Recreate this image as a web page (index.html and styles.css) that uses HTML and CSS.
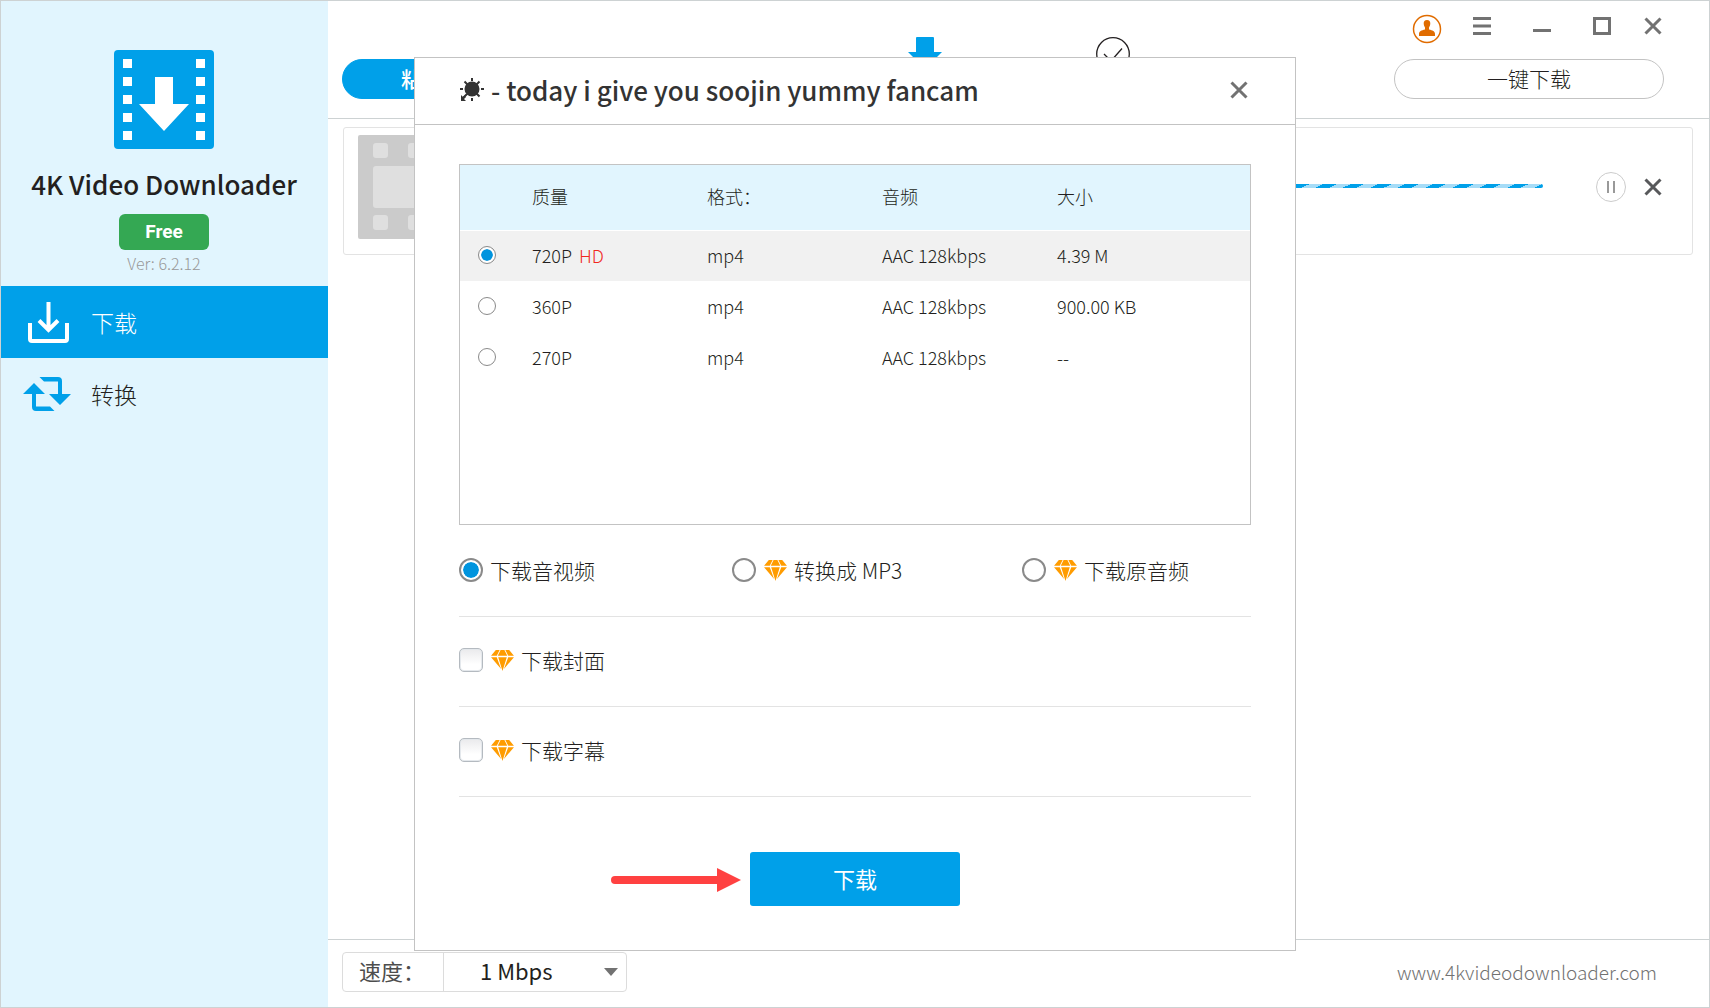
FILE: index.html
```html
<!DOCTYPE html>
<html lang="zh-CN">
<head>
<meta charset="utf-8">
<title>4K Video Downloader</title>
<link rel="stylesheet" href="styles.css">
</head>
<body>
<svg class="symbols" aria-hidden="true">
  <symbol id="gem" viewBox="0 0 24 22">
    <path d="M5 0h4L6 6H0zM10 0h4l3 6H7zM15 0h4l5 6h-6zM0 7.500h6L10.500 20zM7.500 7.500h9L12 22zM18 7.500h6L13.500 20z"/>
  </symbol>
  <symbol id="cross" viewBox="0 0 18 18">
    <path d="M1.500 1.500l15 15M16.500 1.500l-15 15" fill="none" stroke="currentColor" stroke-width="3"/>
  </symbol>
</svg>
<div class="window">
  <aside class="sidebar">
    <div class="brand">
      <svg class="logo" viewBox="0 0 100 99" aria-hidden="true">
        <rect width="100" height="99" rx="4" fill="#00a0e9"/>
        <path fill="#fff" d="M9 9h9v9H9zM9 27h9v9H9zM9 45h9v9H9zM9 63h9v9H9zM9 81h9v9H9zM82 9h9v9h-9zM82 27h9v9h-9zM82 45h9v9h-9zM82 63h9v9h-9zM82 81h9v9h-9zM41 27h18v27h16L50 81 25 54h16z"/>
      </svg>
      <h1 class="brand-name">4K Video Downloader</h1>
      <span class="badge">Free</span>
      <span class="version">Ver: 6.2.12</span>
    </div>
    <nav class="nav">
      <a class="nav-item active" href="#download">
        <svg class="nav-icon" viewBox="0 0 48 42" fill="none" stroke="#fff" stroke-width="4" aria-hidden="true">
          <path d="M7 22v16a2 2 0 0 0 2 2h33a2 2 0 0 0 2-2V22M25.500 1v28M16 19.500l9.500 9.500 9.500-9.500"/>
        </svg>
        下载
      </a>
      <a class="nav-item" href="#convert">
        <svg class="nav-icon" viewBox="0 0 48 42" fill="#00a0e9" aria-hidden="true">
          <path d="M16.500 4H35q4 0 4 4v13h9L37 32 26 21h9V8.500H21zM11 10L22 21h-9v12.500h14l4.500 4.500H13q-4 0-4-4V21H0z"/>
        </svg>
        转换
      </a>
    </nav>
  </aside>

  <main class="main">
    <header class="topbar">
      <button class="pill paste" type="button">粘贴链接</button>
      <div class="tabs">
        <button class="icon-button" type="button" aria-label="下载中">
          <svg width="34" height="34" viewBox="0 0 34 34"><path fill="#00a0e9" d="M9 0h16q1 0 1 1v14h8L17 32 0 15h8V1q0-1 1-1z"/></svg>
        </button>
        <button class="icon-button" type="button" aria-label="已完成">
          <svg width="34" height="34" viewBox="0 0 34 34" fill="none" stroke="#231f20" stroke-width="1.300"><circle cx="17" cy="17" r="16.300"/><path d="M8 17l7 7 11-12.500"/></svg>
        </button>
      </div>
      <div class="tools">
        <div class="window-controls">
          <button class="icon-button account" type="button" aria-label="账户">
            <svg width="30" height="30" viewBox="0 0 30 30" fill="#e06c00"><circle cx="15" cy="15" r="13.500" fill="none" stroke="#e06c00" stroke-width="1.500"/><path d="M15 6c2.300 0 3.500 1.500 3.300 3.800-.2 2-.8 2.800-1.300 3.600v2.200c3.500.9 6 1.800 6 4.400v2H7v-2c0-2.600 2.500-3.500 6-4.400v-2.200c-.5-.8-1.100-1.600-1.300-3.600C11.500 7.500 12.700 6 15 6z"/></svg>
          </button>
          <button class="icon-button wide" type="button" aria-label="菜单">
            <svg width="18" height="18" viewBox="0 0 18 18" fill="#727272"><path d="M0 0h18v3H0zM0 7.500h18v3H0zM0 15h18v3H0z"/></svg>
          </button>
          <button class="icon-button wide" type="button" aria-label="最小化">
            <svg width="18" height="18" viewBox="0 0 18 18" fill="#727272"><path d="M0 12h18v3H0z"/></svg>
          </button>
          <button class="icon-button wide" type="button" aria-label="最大化">
            <svg width="18" height="18" viewBox="0 0 18 18" fill="none" stroke="#727272" stroke-width="3"><path d="M1.500 1.500h15v15h-15z"/></svg>
          </button>
          <button class="icon-button" type="button" aria-label="关闭">
            <svg width="18" height="18"><use href="#cross"/></svg>
          </button>
        </div>
        <button class="pill one-click" type="button">一键下载</button>
      </div>
    </header>

    <section class="tasks">
      <article class="task">
        <svg class="thumb" viewBox="0 0 104 104" aria-hidden="true">
          <rect width="104" height="104" rx="2" fill="#cbcbcb"/>
          <g fill="#dfdfdf"><rect x="15" y="8" width="15" height="15" rx="3"/><rect x="50" y="8" width="15" height="15" rx="3"/><rect x="15" y="31" width="74" height="42" rx="3"/><rect x="15" y="80" width="15" height="15" rx="3"/><rect x="50" y="80" width="15" height="15" rx="3"/></g>
        </svg>
        <div class="progress" role="progressbar" aria-label="下载进度"></div>
        <button class="pause" type="button" aria-label="暂停">
          <svg width="10" height="12" viewBox="0 0 10 12" fill="#999"><path d="M1 0h2v12H1zM7 0h2v12H7z"/></svg>
        </button>
        <button class="icon-button remove" type="button" aria-label="移除">
          <svg width="18" height="18"><use href="#cross"/></svg>
        </button>
      </article>
    </section>

    <footer class="statusbar">
      <div class="speed">
        <label class="speed-label" for="speed">速度：</label>
        <div class="speed-field">
          <select id="speed" class="speed-select"><option>1 Mbps</option></select>
        </div>
      </div>
      <a class="site" href="#site">www.4kvideodownloader.com</a>
    </footer>
  </main>

  <div class="overlay">
    <form class="dialog" role="dialog" aria-labelledby="dialog-title">
      <header class="dialog-header">
        <svg class="sun" viewBox="0 0 24 24" aria-hidden="true">
          <circle cx="12" cy="11" r="7.500" fill="#333"/>
          <path d="M12 0v3M12 20v3M0 11h3M21 11h3M4.500 3.500l3 3M19.500 3.500l-3 3M19.500 18.500l-3-3M7 16l-5 5" stroke="#333" stroke-width="2"/>
          <path d="M1 17v6h5l-2-2 2-2-1.500-1.500L3 19z" fill="#333"/>
        </svg>
        <h2 class="dialog-title" id="dialog-title">- today i give you soojin yummy fancam</h2>
        <button class="icon-button" type="button" aria-label="关闭对话框">
          <svg width="18" height="18"><use href="#cross"/></svg>
        </button>
      </header>
      <div class="dialog-body">
        <div class="formats">
          <table class="format-table">
            <thead>
              <tr><th class="pick" aria-label="选择"></th><th class="col">质量</th><th class="col">格式：</th><th class="col">音频</th><th>大小</th></tr>
            </thead>
            <tbody>
              <tr class="selected"><td class="pick"><input class="radio" type="radio" name="quality" id="q720" checked></td><td><label for="q720">720P <span class="hd">HD</span></label></td><td>mp4</td><td>AAC 128kbps</td><td>4.39 M</td></tr>
              <tr><td class="pick"><input class="radio" type="radio" name="quality" id="q360"></td><td><label for="q360">360P</label></td><td>mp4</td><td>AAC 128kbps</td><td>900.00 KB</td></tr>
              <tr><td class="pick"><input class="radio" type="radio" name="quality" id="q270"></td><td><label for="q270">270P</label></td><td>mp4</td><td>AAC 128kbps</td><td>--</td></tr>
            </tbody>
          </table>
        </div>
        <div class="options modes">
          <label class="option"><input class="radio large" type="radio" name="mode" checked>下载音视频</label>
          <label class="option"><input class="radio large" type="radio" name="mode"><svg class="gem"><use href="#gem"/></svg>转换成 MP3</label>
          <label class="option"><input class="radio large" type="radio" name="mode"><svg class="gem"><use href="#gem"/></svg>下载原音频</label>
        </div>
        <div class="options">
          <label class="option"><input class="check" type="checkbox"><svg class="gem"><use href="#gem"/></svg>下载封面</label>
        </div>
        <div class="options">
          <label class="option"><input class="check" type="checkbox"><svg class="gem"><use href="#gem"/></svg>下载字幕</label>
        </div>
        <div class="actions">
          <button class="submit" type="button">下载</button>
          <svg class="pointer" viewBox="0 0 130 24" aria-hidden="true"><path d="M4 12h106" stroke="#ff4141" stroke-width="8" stroke-linecap="round"/><path d="M106 0l24 12-24 12z" fill="#ff4141"/></svg>
        </div>
      </div>
    </form>
  </div>
</div>
</body>
</html>
```
FILE: styles.css
```css
* {
  box-sizing: border-box;
}

body {
  margin: 0;
  color: #231f20;
  background: #fff;
  font-family: "Noto Sans CJK SC", "Noto Sans", sans-serif;
  font-size: 18px;
  font-weight: 300;
}

button,
select,
input {
  margin: 0;
  font: inherit;
  color: inherit;
}

svg {
  display: block;
}

.symbols {
  position: absolute;
  width: 0;
  height: 0;
}

.window {
  position: relative;
  display: flex;
  min-height: 100vh;
  border: 1px solid #cdd2d3;
}

/* Sidebar */
.sidebar {
  flex: 0 0 327px;
  background: #e1f5fe;
}

.brand {
  display: flex;
  flex-direction: column;
  align-items: center;
  height: 285px;
  padding: 49px 1px 0 0;
}

.logo {
  width: 100px;
  height: 99px;
}

.brand-name {
  margin: 16px 0 11px;
  font-size: 26px;
  font-weight: 500;
  line-height: 38px;
  white-space: nowrap;
}

.badge {
  width: 90px;
  border-radius: 6px;
  background: #34a853;
  color: #fff;
  font-family: Roboto, sans-serif;
  font-size: 19px;
  font-weight: 700;
  line-height: 36px;
  text-align: center;
}

.version {
  color: #999;
  font-size: 16px;
  line-height: 26px;
}

.nav-item {
  display: flex;
  align-items: center;
  gap: 20px;
  height: 72px;
  padding-left: 22px;
  color: inherit;
  font-size: 23px;
  text-decoration: none;
}

.nav-item.active {
  background: #00a0e9;
  color: #fff;
}

.nav-icon {
  width: 48px;
  height: 42px;
}

/* Main area */
.main {
  flex: 1;
  display: flex;
  flex-direction: column;
  min-width: 0;
}

.topbar {
  display: flex;
  align-items: flex-start;
  justify-content: space-between;
  height: 118px;
  padding: 13px 40px 0 14px;
  border-bottom: 1px solid #cdd2d3;
}

.pill {
  width: 270px;
  height: 40px;
  padding: 0 0 2px;
  border: 1px solid #c3c3c3;
  border-radius: 20px;
  background: #fff;
  font-size: 21px;
  line-height: 36px;
}

.paste {
  margin-top: 45px;
  padding-left: 58px;
  border-color: #00a0e9;
  background: #00a0e9;
  color: #fff;
  font-weight: 500;
  text-align: left;
}

.icon-button {
  display: grid;
  place-items: center;
  min-width: 30px;
  height: 30px;
  padding: 0;
  border: 0;
  background: none;
  color: #727272;
}

.tabs {
  display: flex;
  gap: 154px;
  margin-top: 23px;
  padding-left: 32px;
}

.tools {
  display: flex;
  flex-direction: column;
  align-items: flex-end;
  width: 275px;
  gap: 17px;
}

.window-controls {
  display: flex;
  gap: 12px;
  height: 28px;
  margin-right: 1px;
}

.window-controls .icon-button {
  height: 24px;
}

.window-controls .account {
  width: 38px;
  height: 30px;
}

.window-controls .wide {
  width: 48px;
}

.one-click {
  margin-right: 5px;
}

.tasks {
  flex: 1;
  padding: 8px 16px 8px 15px;
}

.task {
  display: flex;
  align-items: center;
  height: 128px;
  padding: 0 24px 0 14px;
  border: 1px solid #e3e3e3;
  border-radius: 3px;
}

.thumb {
  width: 104px;
  height: 104px;
  margin-bottom: 8px;
}

.progress {
  flex: 1;
  height: 4px;
  margin: 0 53px 10px 40px;
  border-radius: 2px;
  background: repeating-linear-gradient(154deg, #00a0e9 0 6px, #a6dcf7 6px 12px);
}

.pause {
  display: grid;
  place-items: center;
  width: 30px;
  height: 30px;
  margin: 0 12px 8px 0;
  padding: 0;
  border: 1px solid #ccc;
  border-radius: 50%;
  background: #fff;
}

.remove {
  margin-bottom: 8px;
  color: #58595b;
}

.statusbar {
  display: flex;
  align-items: center;
  justify-content: space-between;
  height: 68px;
  padding: 0 52px 4px 14px;
  border-top: 1px solid #cdd2d3;
}

.speed {
  display: flex;
  height: 40px;
  border: 1px solid #dcdcdc;
  border-radius: 4px;
  font-size: 22px;
  line-height: 34px;
}

.speed-label {
  width: 101px;
  padding-left: 16px;
  border-right: 1px solid #dcdcdc;
  color: #4d4d4d;
  font-weight: 400;
}

.speed-field {
  display: flex;
  align-items: center;
  width: 182px;
  padding-right: 8px;
}

.speed-field::after {
  content: "";
  border: 7px solid transparent;
  border-top: 8px solid #727272;
  border-bottom: 0;
}

.speed-select {
  flex: 1;
  height: 38px;
  padding: 0 0 4px 36px;
  border: 0;
  appearance: none;
  background: none;
  font-weight: 400;
}

.site {
  color: #727272;
  font-size: 19px;
  text-decoration: none;
}

/* Dialog */
.overlay {
  position: absolute;
  inset: 56px 0 auto;
  display: flex;
  justify-content: center;
}

.dialog {
  width: 882px;
  border: 1px solid #c3c3c3;
  background: #fff;
}

.dialog-header {
  display: flex;
  align-items: center;
  height: 67px;
  padding: 0 41px 2px 45px;
  border-bottom: 1px solid #c3c3c3;
}

.sun {
  width: 24px;
  height: 24px;
}

.dialog-title {
  flex: 1;
  margin: 0 0 2px 7px;
  color: #333;
  font-size: 26px;
  font-weight: 500;
}

.dialog-body {
  padding: 39px 44px 44px;
}

.formats {
  height: 361px;
  border: 1px solid #c3c3c3;
}

.format-table {
  width: 100%;
  border-collapse: collapse;
  table-layout: fixed;
}

.format-table th,
.format-table td {
  height: 51px;
  padding: 0 0 2px;
  font-weight: 300;
  text-align: left;
}

.format-table th {
  height: 65px;
  border-bottom: 1px solid #fff;
  background: #e1f5fe;
}

.format-table .pick {
  width: 72px;
  padding-left: 18px;
}

.col {
  width: 175px;
}

.selected {
  background: #f1f1f1;
}

.hd {
  margin-left: 3px;
  color: #f0281e;
}

.radio {
  display: block;
  width: 18px;
  height: 18px;
  padding: 2px;
  border: 1px solid #8a8a8a;
  border-radius: 50%;
  appearance: none;
  background: #fff content-box;
}

.radio.large {
  width: 24px;
  height: 24px;
  border-width: 2px;
}

.radio:checked {
  background-color: #0094de;
  box-shadow: inset 0 0 0 2px #fff;
}

.options {
  display: flex;
  align-items: center;
  height: 90px;
  padding-bottom: 3px;
  border-bottom: 1px solid #e3e3e3;
  font-size: 21px;
}

.modes {
  display: grid;
  grid-template-columns: 273px 290px auto;
  height: 92px;
  padding-bottom: 1px;
}

.option {
  display: flex;
  align-items: center;
  gap: 7px;
}

.check {
  width: 24px;
  height: 24px;
  border: 1px solid #b4bac0;
  border-radius: 5px;
  appearance: none;
  background: linear-gradient(#eaeaec, #fff 70%);
  box-shadow: inset 0 0 0 1px #e4e8ec;
}

.gem {
  width: 23px;
  height: 21px;
  margin-left: 1px;
  fill: #ff9c00;
}

.actions {
  position: relative;
  display: flex;
  justify-content: center;
  padding-top: 55px;
}

.submit {
  width: 210px;
  height: 54px;
  padding: 0 0 2px;
  border: 0;
  border-radius: 3px;
  background: #00a0e9;
  color: #fff;
  font-size: 22px;
  font-weight: 400;
}

/* Callout arrow that floats beside the submit button */
.pointer {
  position: absolute;
  right: 510px;
  bottom: 14px;
  width: 130px;
  height: 24px;
}
```
